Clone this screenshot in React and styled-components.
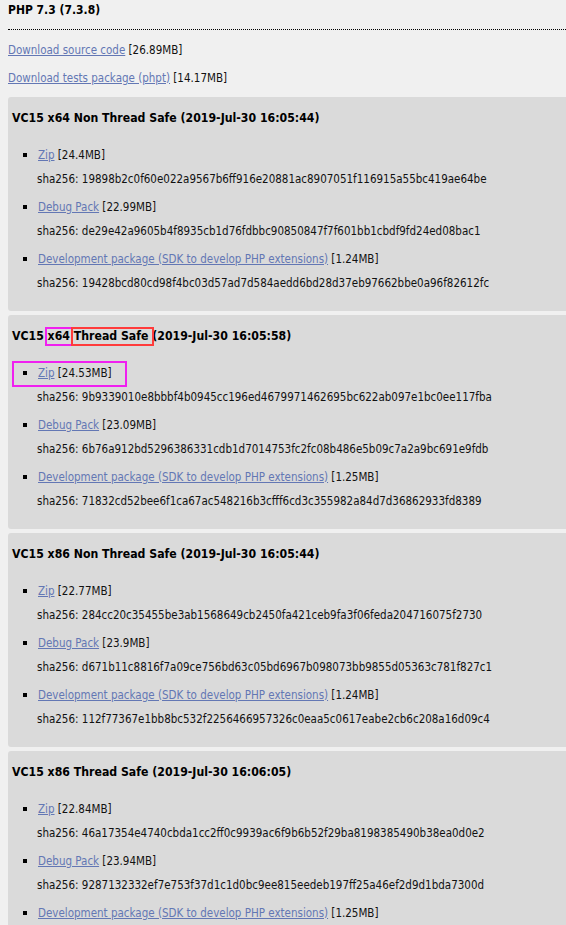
import styled, { createGlobalStyle } from 'styled-components'

const builds = [
  {
    title: 'VC15 x64 Non Thread Safe (2019-Jul-30 16:05:44)',
    items: [
      { label: 'Zip', size: '24.4MB', sha: '19898b2c0f60e022a9567b6ff916e20881ac8907051f116915a55bc419ae64be' },
      { label: 'Debug Pack', size: '22.99MB', sha: 'de29e42a9605b4f8935cb1d76fdbbc90850847f7f601bb1cbdf9fd24ed08bac1' },
      { label: 'Development package (SDK to develop PHP extensions)', size: '1.24MB', sha: '19428bcd80cd98f4bc03d57ad7d584aedd6bd28d37eb97662bbe0a96f82612fc' }
    ]
  },
  {
    title: 'VC15 x64 Thread Safe (2019-Jul-30 16:05:58)',
    marked: true,
    items: [
      { label: 'Zip', size: '24.53MB', sha: '9b9339010e8bbbf4b0945cc196ed4679971462695bc622ab097e1bc0ee117fba' },
      { label: 'Debug Pack', size: '23.09MB', sha: '6b76a912bd5296386331cdb1d7014753fc2fc08b486e5b09c7a2a9bc691e9fdb' },
      { label: 'Development package (SDK to develop PHP extensions)', size: '1.25MB', sha: '71832cd52bee6f1ca67ac548216b3cfff6cd3c355982a84d7d36862933fd8389' }
    ]
  },
  {
    title: 'VC15 x86 Non Thread Safe (2019-Jul-30 16:05:44)',
    items: [
      { label: 'Zip', size: '22.77MB', sha: '284cc20c35455be3ab1568649cb2450fa421ceb9fa3f06feda204716075f2730' },
      { label: 'Debug Pack', size: '23.9MB', sha: 'd671b11c8816f7a09ce756bd63c05bd6967b098073bb9855d05363c781f827c1' },
      { label: 'Development package (SDK to develop PHP extensions)', size: '1.24MB', sha: '112f77367e1bb8bc532f2256466957326c0eaa5c0617eabe2cb6c208a16d09c4' }
    ]
  },
  {
    title: 'VC15 x86 Thread Safe (2019-Jul-30 16:06:05)',
    items: [
      { label: 'Zip', size: '22.84MB', sha: '46a17354e4740cbda1cc2ff0c9939ac6f9b6b52f29ba8198385490b38ea0d0e2' },
      { label: 'Debug Pack', size: '23.94MB', sha: '9287132332ef7e753f37d1c1d0bc9ee815eedeb197ff25a46ef2d9d1bda7300d' },
      { label: 'Development package (SDK to develop PHP extensions)', size: '1.25MB', sha: '' }
    ]
  }
]

export default function App () {
  return (
    <Page>
      <GlobalStyle />
      <Title>PHP 7.3 (7.3.8)</Title>
      <TopLink><Link href='#'>Download source code</Link> [26.89MB]</TopLink>
      <TopLink gap={8}><Link href='#'>Download tests package (phpt)</Link> [14.17MB]</TopLink>
      <Builds>
        {builds.map((b) => (
          <Box key={b.title}>
            {b.marked
              ? (
                <Heading>
                  VC15 <Mark color='#f020f0'>x64</Mark> <Mark color='#ff3b3b' wide>Thread Safe</Mark> (2019-Jul-30 16:05:58)
                </Heading>
                )
              : <Heading>{b.title}</Heading>}
            <List>
              {b.items.map((it, i) => (
                <Item key={it.label}>
                  <LinkRow>
                    {b.marked && i === 0 && <RowMark />}
                    <Square />
                    <span><Link href='#'>{it.label}</Link> [{it.size}]</span>
                  </LinkRow>
                  {it.sha && <Sha>sha256: {it.sha}</Sha>}
                </Item>
              ))}
            </List>
          </Box>
        ))}
      </Builds>
    </Page>
  )
}

const GlobalStyle = createGlobalStyle`
html, body {
  margin: 0;
  padding: 0;
  background: #f0f0f0;
  overflow: hidden;
}
`
const Page = styled.div`
padding: 0 0 0 8px;
font-family: "DejaVu Sans", Verdana, sans-serif;
font-stretch: condensed;
font-size: 11.5px;
color: #111;
`
const Title = styled.h2`
margin: 0;
font-size: 12px;
font-weight: bold;
line-height: 21px;
padding-bottom: 8px;
border-bottom: 1px dotted #000;
color: #000;
`
const TopLink = styled.div`
margin-top: ${({ gap }) => gap || 10}px;
line-height: 20px;
white-space: nowrap;
`
const Link = styled.a`
color: #6377b4;
text-decoration: underline;
`
const Builds = styled.div`
margin-top: 9px;
display: flex;
flex-direction: column;
gap: 4px;
`
const Box = styled.div`
background: #dadada;
border-radius: 3px 0 0 3px;
padding: 11px 0 18px 4px;
margin-right: -20px;
`
const Heading = styled.h3`
position: relative;
margin: 0;
font-size: 12.2px;
font-weight: bold;
line-height: 20px;
height: 20px;
color: #000;
white-space: nowrap;
`
const Mark = styled.span`
position: relative;
&::after {
  content: '';
  position: absolute;
  left: -3px;
  right: ${({ wide }) => (wide ? '-6px' : '-3px')};
  top: -2px;
  bottom: -3px;
  border: 2px solid ${({ color }) => color};
}
`
const List = styled.div`
margin-top: 17px;
display: flex;
flex-direction: column;
gap: 8px;
`
const Item = styled.div`
display: flex;
flex-direction: column;
gap: 4px;
`
const LinkRow = styled.div`
position: relative;
display: flex;
align-items: center;
height: 20px;
line-height: 20px;
white-space: nowrap;
`
const RowMark = styled.div`
position: absolute;
left: 0;
top: -2px;
width: 115px;
height: 26px;
box-sizing: border-box;
border: 2px solid #f020f0;
`
const Square = styled.span`
width: 4px;
height: 4px;
background: #000;
margin: 0 11px 0 11px;
flex-shrink: 0;
`
const Sha = styled.div`
padding-left: 25px;
height: 20px;
line-height: 20px;
white-space: nowrap;
`
